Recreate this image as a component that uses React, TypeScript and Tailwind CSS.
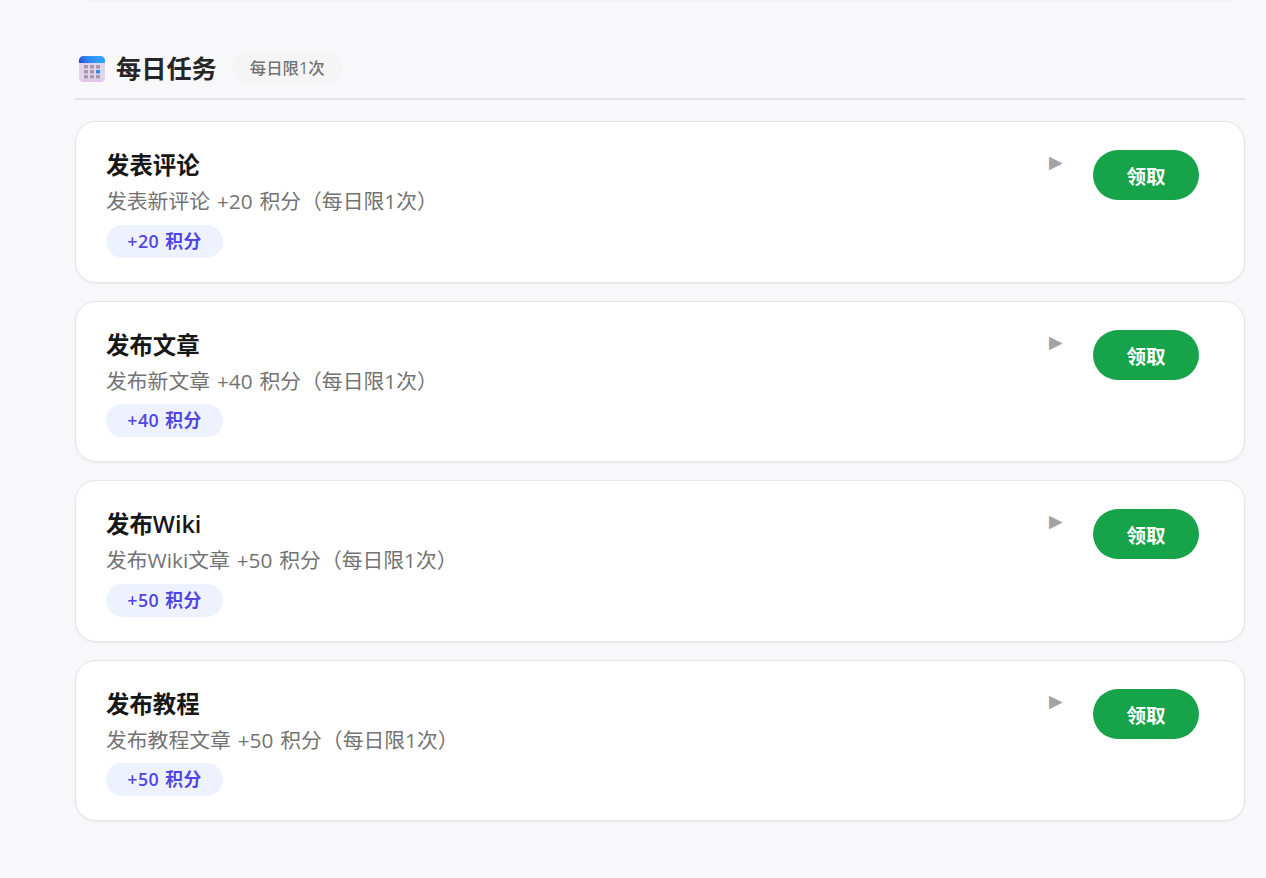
import React, { useState } from 'react';

type Task = {
    id: string;
    title: string;
    description: string;
    points: number;
};

const dailyTasks: Task[] = [
    { id: 'comment', title: '发表评论', description: '发表新评论 +20 积分（每日限1次）', points: 20 },
    { id: 'article', title: '发布文章', description: '发布新文章 +40 积分（每日限1次）', points: 40 },
    { id: 'wiki', title: '发布Wiki', description: '发布Wiki文章 +50 积分（每日限1次）', points: 50 },
    { id: 'tutorial', title: '发布教程', description: '发布教程文章 +50 积分（每日限1次）', points: 50 },
];

const CalendarIcon = () => (
    <svg width="26" height="26" viewBox="0 0 26 26" className="shrink-0">
        <defs>
            <linearGradient id="calTop" x1="0" y1="0.6" x2="1" y2="0.4">
                <stop offset="0" stopColor="#2a4fd4" />
                <stop offset="0.4" stopColor="#2f8df5" />
                <stop offset="1" stopColor="#2fa9ff" />
            </linearGradient>
            <linearGradient id="calBody" x1="0" y1="0" x2="0" y2="1">
                <stop offset="0" stopColor="#ded5e8" />
                <stop offset="0.8" stopColor="#e2d3ea" />
                <stop offset="1" stopColor="#e2c2ee" />
            </linearGradient>
        </defs>
        <rect width="26" height="26" rx="4.5" fill="url(#calBody)" />
        <path d="M0 7V4.5A4.5 4.5 0 0 1 4.5 0h17A4.5 4.5 0 0 1 26 4.5V7z" fill="url(#calTop)" />
        {[9, 14, 19].map((y) =>
            [5, 11, 17].map((x) => (
                <rect
                    key={`${x}-${y}`}
                    x={x}
                    y={y}
                    width="4"
                    height="3.4"
                    rx="0.6"
                    fill={x === 17 && y === 14 ? '#2389ee' : '#a398ad'}
                />
            ))
        )}
    </svg>
);

const TaskCard = ({ task, onClaim }: { task: Task; onClaim: (id: string) => void }) => (
    <div className="flex h-[161.3px] items-start justify-between rounded-[21px] border border-[#e5e5e5] bg-white pl-[30px] pr-[45px] shadow-[0_1px_3px_rgba(0,0,0,0.05)]">
        <div className="pt-6">
            <h3 className="h-[38px] text-[23.4px] font-semibold leading-[38px] text-[#171717]">{task.title}</h3>
            <p className="h-[33px] text-[20.8px] leading-[35px] text-[#737373] [word-spacing:1.5px]">{task.description}</p>
            <span className="mt-[7.4px] flex h-[33px] w-[117px] items-center justify-center rounded-full bg-[#eef2ff] text-[17.8px] font-semibold tracking-[0.5px] text-[#4f46e5] [word-spacing:0.8px]">
                +{task.points} 积分
            </span>
        </div>

        <div className="flex items-start gap-[30.4px] pt-7">
            <span className="mt-[1.6px] font-['DejaVu_Sans'] text-[17.6px] leading-[21px] text-[#a3a3a3]">▶</span>
            <button
                type="button"
                onClick={() => onClaim(task.id)}
                className="h-[50px] w-[106px] rounded-full bg-[#16a34a] pt-[3px] text-[19.5px] font-semibold leading-[47px] text-white"
            >
                领取
            </button>
        </div>
    </div>
);

const DailyTasksPage = () => {
    const [, setClaimed] = useState<string[]>([]);

    const handleClaim = (id: string) => {
        setClaimed((prev) => [...prev, id]);
    };

    return (
        <div className="h-[878px] overflow-hidden bg-[#f8f8fb] pl-[75px] pr-[21px] font-['Open_Sans','Noto_Sans_CJK_SC',sans-serif]">
            {/* Нижний край предыдущего блока */}
            <div className="mx-3 h-[2px] bg-gradient-to-b from-[#f1f1f3] to-[#f6f6f8]" />

            <section className="pt-[37px]">
                <div className="flex h-[61px] items-center border-b-2 border-[#e5e5e8] pl-1">
                    <CalendarIcon />
                    <h2 className="ml-[11px] pb-[2px] text-[25.2px] font-semibold leading-[38px] text-[#262626]">每日任务</h2>
                    <span className="mb-[2px] ml-[15px] flex h-[31px] w-[111px] items-center justify-center rounded-full bg-[#f5f5f5] pt-[2px] text-[16.4px] font-medium text-[#737373]">
                        每日限1次
                    </span>
                </div>

                <div className="mt-[21.4px] flex flex-col gap-[18.23px]">
                    {dailyTasks.map((task) => (
                        <TaskCard key={task.id} task={task} onClaim={handleClaim} />
                    ))}
                </div>
            </section>
        </div>
    );
};

export default DailyTasksPage;
